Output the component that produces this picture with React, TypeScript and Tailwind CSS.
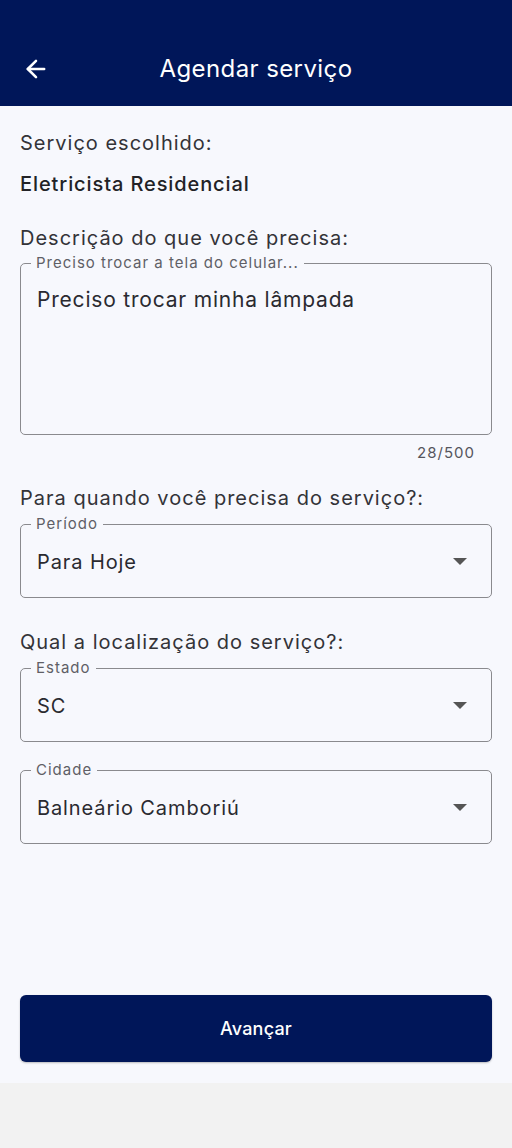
import { ArrowLeft } from 'lucide-react';

const FONT = { fontFamily: 'Inter, "Noto Sans", sans-serif' };

function Caret() {
    return (
        <svg width="14" height="8" viewBox="0 0 14 8" className="shrink-0">
            <path d="M0 0 L14 0 L7 7 Z" fill="#555" />
        </svg>
    );
}

function SelectField({ label, value, className = '' }: { label: string; value: string; className?: string }) {
    return (
        <fieldset className={`border border-[#8a8a8e] rounded-[5px] ${className}`}>
            <legend className="ml-[10px] px-[5px] text-[15px] leading-4 tracking-[1px] text-[#5f5f66]">{label}</legend>
            <div className="flex items-start justify-between h-[65px] pt-[16px] pl-4 pr-[24px]">
                <span className="text-[20px] leading-7 tracking-[0.9px] text-[#2a2a30]">{value}</span>
                <span className="pt-[10px]"><Caret /></span>
            </div>
        </fieldset>
    );
}

export default function App() {
    return (
        <div className="w-[512px] min-h-[1148px] bg-[#f2f2f2]" style={FONT}>
            {/* Top bar */}
            <header className="h-[106px] bg-[#001659] pt-[33px]">
                <div className="relative flex items-center justify-center h-[72px]">
                    <ArrowLeft className="absolute left-[22px] h-[28px] w-[28px] text-white" strokeWidth={2.2} />
                    <h1 className="text-[24px] text-white leading-8 tracking-[0.4px]">Agendar serviço</h1>
                </div>
            </header>

            <main className="bg-[#f7f8fd] px-5 pt-[23px] h-[977px] flex flex-col">
                <p className="text-[20px] leading-7 tracking-[1px] text-[#333338]">Serviço escolhido:</p>
                <p className="mt-[14px] text-[20px] leading-[26px] tracking-[0.9px] font-medium text-[#222226]">Eletricista Residencial</p>

                <p className="mt-[27px] text-[20px] leading-7 tracking-[1px] text-[#333338]">Descrição do que você precisa:</p>
                <fieldset className="mt-[3px] border border-[#8a8a8e] rounded-[5px]">
                    <legend className="ml-[10px] px-[5px] text-[15px] leading-4 tracking-[1px] text-[#5f5f66]">Preciso trocar a tela do celular...</legend>
                    <div className="h-[163px] pt-[15px] px-4 text-[21px] leading-7 tracking-[0.8px] text-[#2a2a30]">Preciso trocar minha lâmpada</div>
                </fieldset>
                <p className="mt-[8px] pr-[17px] text-right text-[15px] leading-5 tracking-[1px] text-[#55555c]">28/500</p>

                <p className="mt-[21px] text-[20px] leading-7 tracking-[1px] text-[#333338]">Para quando você precisa do serviço?:</p>
                <SelectField label="Período" value="Para Hoje" className="mt-[4px]" />

                <p className="mt-[30px] text-[20px] leading-7 tracking-[1px] text-[#333338]">Qual a localização do serviço?:</p>
                <SelectField label="Estado" value="SC" className="mt-1" />
                <SelectField label="Cidade" value="Balneário Camboriú" className="mt-[20px]" />

                <button className="mt-[151px] h-[67px] w-full rounded-[6px] bg-[#001659] text-white text-[18px] font-medium tracking-[0.2px] shadow-[0_1px_2px_rgba(0,0,0,0.25)]">
                    Avançar
                </button>
            </main>
        </div>
    );
}
